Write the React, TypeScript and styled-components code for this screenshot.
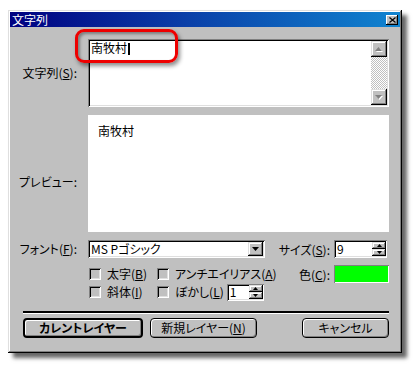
import React from "react";
import styled, { createGlobalStyle } from "styled-components";

const Global = createGlobalStyle`
  html, body { margin: 0; padding: 0; background: #ffffff; }
  body {
    font-family: "Noto Sans CJK JP", "Noto Sans", sans-serif;
    font-size: 12px;
    color: #000;
    font-feature-settings: "palt";
  }
  #root { width: 416px; height: 368px; }
`;

const Page = styled.div`
  width: 416px;
  height: 368px;
  padding: 10px 0 0 8px;
  box-sizing: border-box;
`;

const Window = styled.div`
  position: relative;
  width: 394px;
  height: 343px;
  box-sizing: border-box;
  padding: 2px;
  background: #c0c0c0;
  box-shadow: inset -1px -1px #000, inset 1px 1px #dfdfdf,
    inset -2px -2px #808080, inset 2px 2px #fff,
    5px 5px 4px rgba(0, 0, 0, 0.6);
  display: flex;
  flex-direction: column;
`;

const TitleBar = styled.div`
  height: 15px;
  display: flex;
  align-items: center;
  justify-content: space-between;
  background: linear-gradient(90deg, #000080 0%, #0a3fa8 45%, #1084d0 100%);
  color: #fff;
  padding: 0 2px 0 2px;
`;

const TitleText = styled.span`
  font-size: 12px;
  line-height: 15px;
`;

const CloseBtn = styled.div`
  width: 12px;
  height: 10px;
  box-sizing: border-box;
  background: #c0c0c0;
  box-shadow: inset -1px -1px #000, inset 1px 1px #fff, inset -2px -2px #808080;
  display: flex;
  align-items: center;
  justify-content: center;
  margin-top: 1px;
`;

const Body = styled.div`
  display: grid;
  grid-template-columns: 78px 301px;
  row-gap: 8px;
  padding-top: 12px;
  align-items: start;
`;

const Label = styled.div<{ $top: number }>`
  text-align: right;
  padding-right: 11px;
  padding-top: ${(p) => p.$top}px;
  line-height: 16px;
  white-space: nowrap;
`;

const Sunken = styled.div`
  box-sizing: border-box;
  background: #fff;
  box-shadow: inset 1px 1px #808080, inset -1px -1px #fff,
    inset 2px 2px #000, inset -2px -2px #dfdfdf;
`;

const TextArea = styled(Sunken)`
  height: 68px;
  display: flex;
  padding: 2px 2px 2px 3px;
`;

const TextContent = styled.div`
  flex: 1;
  line-height: 14px;
  display: flex;
  align-items: flex-start;
`;

const Caret = styled.span`
  display: inline-block;
  width: 2px;
  height: 12px;
  background: #000;
  margin-top: 2px;
  margin-left: 1px;
`;

const ScrollBar = styled.div`
  width: 16px;
  display: flex;
  flex-direction: column;
`;

const Track = styled.div`
  flex: 1;
  background-color: #c0c0c0;
  background-image: conic-gradient(#fff 25%, #c0c0c0 0 50%, #fff 0 75%, #c0c0c0 0);
  background-size: 2px 2px;
`;

const Raised = styled.div<{ $w: number; $h: number }>`
  width: ${(p) => p.$w}px;
  height: ${(p) => p.$h}px;
  box-sizing: border-box;
  background: #c0c0c0;
  box-shadow: inset -1px -1px #000, inset 1px 1px #dfdfdf,
    inset -2px -2px #808080, inset 2px 2px #fff;
  display: flex;
  align-items: center;
  justify-content: center;
  flex: none;
`;

const Preview = styled.div`
  height: 117px;
  background: #fff;
  box-sizing: border-box;
  padding: 8px 0 0 10px;
  line-height: 16px;
`;

const FontRow = styled.div`
  display: flex;
  align-items: center;
  height: 18px;
`;

const Combo = styled(Sunken)`
  width: 177px;
  height: 18px;
  display: flex;
  align-items: center;
  justify-content: space-between;
  padding: 0 2px 0 3px;
`;

const FieldText = styled.span`
  line-height: 14px;
`;

const InlineLabel = styled.span<{ $w: number }>`
  width: ${(p) => p.$w}px;
  text-align: right;
  padding-right: 4px;
  box-sizing: border-box;
  white-space: nowrap;
  flex: none;
`;

const Spin = styled(Sunken)<{ $w: number; $h?: number; $ml?: number }>`
  width: ${(p) => p.$w}px;
  height: ${(p) => p.$h ?? 18}px;
  margin-left: ${(p) => p.$ml ?? 0}px;
  display: flex;
  align-items: center;
  justify-content: space-between;
  padding: 0 1px 0 3px;
  flex: none;
`;

const SpinBtns = styled.div`
  display: flex;
  flex-direction: column;
`;

const Options = styled.div`
  grid-column: 2;
  display: flex;
  flex-direction: column;
  margin-top: -1px;
`;

const OptRow = styled.div`
  display: flex;
  align-items: center;
  height: 18px;
`;

const Check = styled.label<{ $w?: number }>`
  display: flex;
  align-items: center;
  gap: 6px;
  padding-left: 1px;
  ${(p) => (p.$w ? `width: ${p.$w}px; flex: none;` : "")}
  white-space: nowrap;
`;

const CheckText = styled.span`
  line-height: 14px;
`;

const Box = styled.span`
  width: 12px;
  height: 12px;
  box-sizing: border-box;
  background: #c0c0c0;
  box-shadow: inset 1px 1px #808080, inset -1px -1px #fff,
    inset 2px 2px #000, inset -2px -2px #dfdfdf;
  flex: none;
`;

const Swatch = styled.div`
  width: 55px;
  height: 18px;
  box-sizing: border-box;
  background: #00ff00;
  box-shadow: inset 1px 1px #808080, inset -1px -1px #fff;
  flex: none;
`;

const Spacer = styled.div`
  flex: 1;
`;

const Footer = styled.div`
  display: flex;
  flex-direction: column;
  padding: 0 11px 0 13px;
  margin-top: 10px;
`;

const Separator = styled.div`
  height: 2px;
  background: #000;
  border-bottom: 1px solid #fff;
`;

const ButtonRow = styled.div`
  display: flex;
  align-items: center;
  margin-top: 4px;
`;

const Button = styled.div<{ $w: number; $default?: boolean; $ml: number }>`
  width: ${(p) => p.$w}px;
  height: 20px;
  margin-left: ${(p) => p.$ml}px;
  box-sizing: border-box;
  border: ${(p) => (p.$default ? 2 : 1)}px solid #000;
  border-radius: 4px;
  background: #c0c0c0;
  box-shadow: inset 1px 1px #fff, inset -1px -1px #808080;
  display: flex;
  align-items: center;
  justify-content: center;
  font-weight: ${(p) => (p.$default ? 700 : 400)};
  line-height: 14px;
  white-space: nowrap;
  flex: none;
`;

const Highlight = styled.div`
  position: absolute;
  left: 67px;
  top: 19px;
  width: 103px;
  height: 34px;
  box-sizing: border-box;
  border: 3px solid #ee0000;
  border-radius: 9px;
  box-shadow: 2px 3px 4px rgba(0, 0, 0, 0.45),
    inset 2px 2px 3px rgba(0, 0, 0, 0.35);
  pointer-events: none;
`;

const ArrowWrap = styled.div`
  position: relative;
  width: 8px;
  height: 5px;
`;

const ArrowLayer = styled.div<{ $o: number }>`
  position: absolute;
  left: ${(p) => p.$o}px;
  top: ${(p) => p.$o}px;
`;

const Arrow = ({ dir, color = "#000", w = 7 }: { dir: "up" | "down"; color?: string; w?: number }) => {
  const h = Math.ceil(w / 2);
  const pts = dir === "up" ? `0,${h} ${w},${h} ${w / 2},0` : `0,0 ${w},0 ${w / 2},${h}`;
  return (
    <svg width={w} height={h} viewBox={`0 0 ${w} ${h}`} style={{ display: "block" }}>
      <polygon points={pts} fill={color} />
    </svg>
  );
};

const DisabledArrow = ({ dir }: { dir: "up" | "down" }) => (
  <ArrowWrap>
    <ArrowLayer $o={1}>
      <Arrow dir={dir} color="#fff" w={7} />
    </ArrowLayer>
    <ArrowLayer $o={0}>
      <Arrow dir={dir} color="#808080" w={7} />
    </ArrowLayer>
  </ArrowWrap>
);

const CloseGlyph = () => (
  <svg width="7" height="6" viewBox="0 0 7 6" style={{ display: "block" }}>
    <path d="M0.5 0.5 L6.5 5.5 M6.5 0.5 L0.5 5.5" stroke="#000" strokeWidth="1.2" />
  </svg>
);

const SpinButtons = () => (
  <SpinBtns>
    <Raised $w={14} $h={7}>
      <Arrow dir="up" w={5} />
    </Raised>
    <Raised $w={14} $h={7}>
      <Arrow dir="down" w={5} />
    </Raised>
  </SpinBtns>
);

export default function App() {
  return (
    <>
      <Global />
      <Page>
        <Window>
          <TitleBar>
            <TitleText>文字列</TitleText>
            <CloseBtn>
              <CloseGlyph />
            </CloseBtn>
          </TitleBar>
          <Body>
            <Label $top={26}>
              文字列(<u>S</u>):
            </Label>
            <TextArea>
              <TextContent>
                南牧村
                <Caret />
              </TextContent>
              <ScrollBar>
                <Raised $w={16} $h={16}>
                  <DisabledArrow dir="up" />
                </Raised>
                <Track />
                <Raised $w={16} $h={16}>
                  <DisabledArrow dir="down" />
                </Raised>
              </ScrollBar>
            </TextArea>

            <Label $top={59}>プレビュー:</Label>
            <Preview>南牧村</Preview>

            <Label $top={1}>
              フォント(<u>F</u>):
            </Label>
            <FontRow>
              <Combo>
                <FieldText>MS Pゴシック</FieldText>
                <Raised $w={15} $h={14}>
                  <Arrow dir="down" w={7} />
                </Raised>
              </Combo>
              <InlineLabel $w={69}>
                サイズ(<u>S</u>):
              </InlineLabel>
              <Spin $w={53}>
                <FieldText>9</FieldText>
                <SpinButtons />
              </Spin>
            </FontRow>

            <Options>
              <OptRow>
                <Check $w={67}>
                  <Box />
                  <CheckText>
                    太字(<u>B</u>)
                  </CheckText>
                </Check>
                <Check>
                  <Box />
                  <CheckText>
                    アンチエイリアス(<u>A</u>)
                  </CheckText>
                </Check>
                <Spacer />
                <InlineLabel $w={40}>
                  色(<u>C</u>):
                </InlineLabel>
                <Swatch />
              </OptRow>
              <OptRow>
                <Check $w={67}>
                  <Box />
                  <CheckText>
                    斜体(<u>I</u>)
                  </CheckText>
                </Check>
                <Check>
                  <Box />
                  <CheckText>
                    ぼかし(<u>L</u>)
                  </CheckText>
                </Check>
                <Spin $w={37} $h={17} $ml={3}>
                  <FieldText>1</FieldText>
                  <SpinButtons />
                </Spin>
              </OptRow>
            </Options>
          </Body>
          <Footer>
            <Separator />
            <ButtonRow>
              <Button $w={120} $ml={0} $default>
                カレントレイヤー
              </Button>
              <Button $w={107} $ml={7}>
                新規レイヤー(<u>N</u>)
              </Button>
              <Button $w={87} $ml={45}>
                キャンセル
              </Button>
            </ButtonRow>
          </Footer>
          <Highlight />
        </Window>
      </Page>
    </>
  );
}
